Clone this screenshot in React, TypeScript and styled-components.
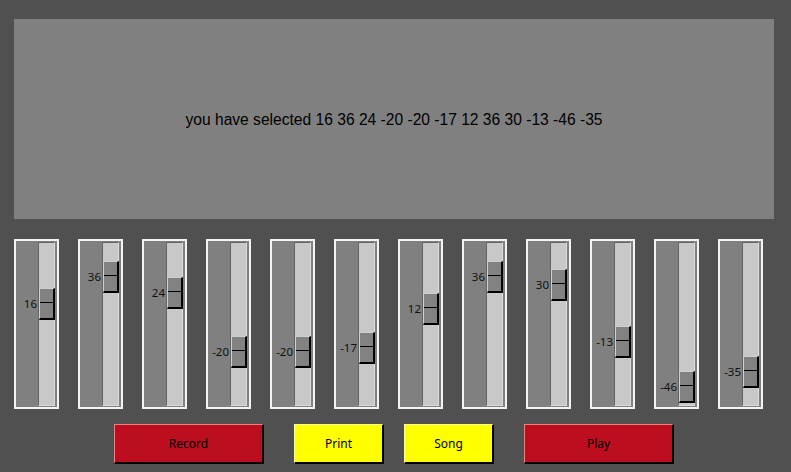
import React from "react";
import styled, { createGlobalStyle } from "styled-components";

const GlobalStyle = createGlobalStyle`
  html, body {
    margin: 0;
    padding: 0;
    background: #505050;
  }
`;

const Window = styled.div`
  box-sizing: border-box;
  width: 791px;
  height: 472px;
  padding: 19px 0 0 14px;
  display: flex;
  flex-direction: column;
  background: #505050;
`;

const Display = styled.div`
  width: 760px;
  height: 200px;
  background: #808080;
  display: flex;
  align-items: center;
  justify-content: center;
  padding-top: 1px;
  box-sizing: border-box;
  font-family: "Liberation Sans", Arial, sans-serif;
  font-size: 15.6px;
  color: #000000;
`;

const SliderRow = styled.div`
  display: flex;
  gap: 19px;
  margin-top: 20px;
`;

const SliderFrame = styled.div`
  box-sizing: border-box;
  width: 45px;
  height: 170px;
  border: 2px solid #f4f4f4;
  background: #808080;
  display: flex;
  justify-content: flex-end;
  padding: 1px 2px 1px 0;
`;

const Track = styled.div`
  box-sizing: border-box;
  position: relative;
  width: 17px;
  height: 100%;
  background: #c8c8c8;
  border-top: 1px solid #646464;
  border-left: 1px solid #646464;
  border-right: 1px solid #dcdcdc;
  border-bottom: 1px solid #dcdcdc;
`;

const Thumb = styled.div`
  box-sizing: border-box;
  position: absolute;
  left: 0;
  width: 16px;
  height: 32px;
  background: #828282;
  border-top: 1px solid #d0d0d0;
  border-left: 1px solid #d0d0d0;
  border-right: 2px solid #000000;
  border-bottom: 2px solid #000000;

  &::after {
    content: "";
    position: absolute;
    left: 0;
    right: 0;
    top: 13px;
    height: 1px;
    background: #000000;
  }
`;

const ValueLabel = styled.span`
  position: absolute;
  right: calc(100% + 3px);
  top: 50%;
  transform: translateY(-50%);
  font-family: "Noto Sans", "Open Sans", sans-serif;
  font-size: 11.5px;
  line-height: 1;
  color: #111111;
  white-space: nowrap;
`;

const ButtonRow = styled.div`
  width: 760px;
  display: flex;
  justify-content: center;
  margin-top: 15px;
`;

const Button = styled.button<{ $tone: "red" | "yellow"; $w: number; $gap: number }>`
  box-sizing: border-box;
  width: ${(p) => p.$w}px;
  height: 40px;
  margin-left: ${(p) => p.$gap}px;
  padding: 0;
  background: ${(p) => (p.$tone === "red" ? "#bc0e1e" : "#ffff00")};
  border-style: solid;
  border-width: 1px 2px 2px 1px;
  border-color: ${(p) =>
    p.$tone === "red"
      ? "#f08080 #000000 #000000 #f08080"
      : "#ffff90 #000000 #000000 #ffff90"};
  font-family: "Noto Sans", "Open Sans", sans-serif;
  font-size: 12px;
  color: #000000;
`;

const values = [16, 36, 24, -20, -20, -17, 12, 36, 30, -13, -46, -35];

function Slider({ value }: { value: number }) {
  const top = Math.round((50 - value) * 1.34) - 1;
  return (
    <SliderFrame>
      <Track>
        <Thumb style={{ top }}>
          <ValueLabel>{value}</ValueLabel>
        </Thumb>
      </Track>
    </SliderFrame>
  );
}

export default function App() {
  return (
    <Window>
      <GlobalStyle />
      <Display>you have selected {values.join(" ")}</Display>
      <SliderRow>
        {values.map((v, i) => (
          <Slider key={i} value={v} />
        ))}
      </SliderRow>
      <ButtonRow>
        <Button $tone="red" $w={150} $gap={0}>Record</Button>
        <Button $tone="yellow" $w={90} $gap={30}>Print</Button>
        <Button $tone="yellow" $w={90} $gap={20}>Song</Button>
        <Button $tone="red" $w={150} $gap={30}>Play</Button>
      </ButtonRow>
    </Window>
  );
}
